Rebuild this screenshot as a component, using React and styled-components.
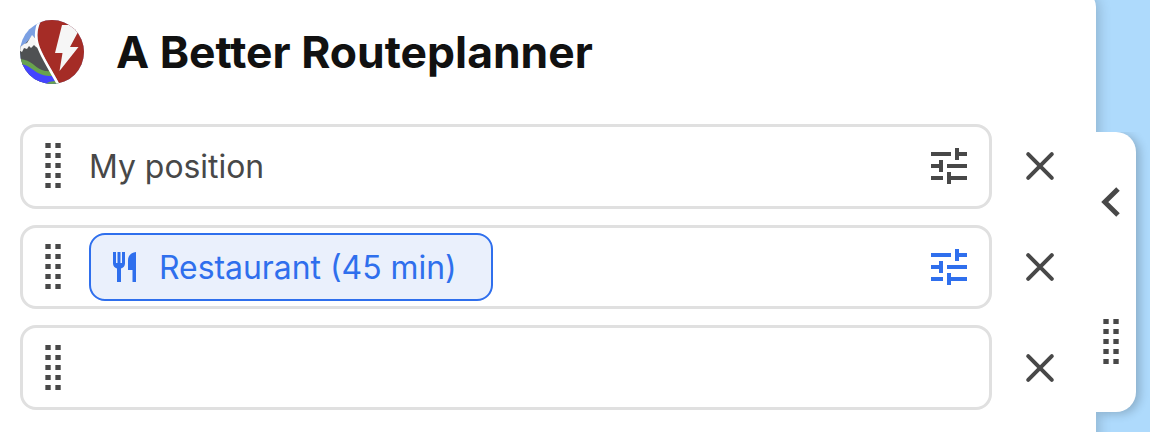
import React from 'react';
import styled, { createGlobalStyle } from 'styled-components';

const GlobalStyle = createGlobalStyle`
  *, *::before, *::after { box-sizing: border-box; }
  body { margin: 0; font-family: Inter, sans-serif; color: #484848; }
  svg { display: block; flex: none; }
`;

const Page = styled.div`
  display: flex;
  width: 1150px;
  height: 432px;
  overflow: hidden;
  background: #aedafc;
`;

const Panel = styled.main`
  width: 1096px;
  height: 460px;
  margin-top: -9px;
  padding: 29px 0 0 20px;
  flex: none;
  background: #fff;
  border-top-right-radius: 16px;
  box-shadow: 2px 2px 14px rgba(0, 0, 0, 0.2);
`;

const Header = styled.header`
  display: flex;
  align-items: center;
  gap: 32px;
  height: 64px;
  margin-bottom: 40px;
`;

const Title = styled.h1`
  margin: 0;
  font-size: 44.45px;
  line-height: 64px;
  font-weight: 700;
  color: #111;
  white-space: nowrap;
`;

const Stops = styled.div`
  display: flex;
  flex-direction: column;
  gap: 16px;
`;

const IconButton = styled.button`
  display: block;
  padding: 0;
  border: 0;
  background: none;
  color: ${(p) => (p.$active ? '#2f6fed' : '#484848')};
`;

const Field = styled.div`
  display: flex;
  align-items: center;
  width: 972px;
  height: 100%;
  padding: 0 16px ${(p) => p.$lift}px 21px;
  border: 3px solid #e0e0e0;
  border-radius: 16px;
`;

const StopRow = styled.div`
  display: flex;
  align-items: center;
  gap: 32px;
  height: ${(p) => p.$height}px;

  > ${IconButton} {
    margin-bottom: ${(p) => p.$lift}px;
  }
`;

const FieldContent = styled.div`
  display: flex;
  align-items: center;
  flex: 1;
  margin-left: 27px;
`;

const Label = styled.span`
  padding-top: 2px;
  font-size: 31.9px;
  line-height: 39px;
  white-space: nowrap;
`;

const Chip = styled.div`
  display: flex;
  align-items: center;
  gap: 22px;
  width: 404px;
  height: 68px;
  margin-top: 1px;
  padding-left: 22px;
  border: 2px solid #2f6fed;
  border-radius: 16px;
  background: #eaf0fc;
  color: #2f6fed;

  ${Label} {
    padding-top: 1px;
  }
`;

const SideTab = styled.aside`
  display: flex;
  flex-direction: column;
  justify-content: space-between;
  width: 40px;
  height: 280px;
  margin-top: 132px;
  padding: 54px 0 48px 5px;
  flex: none;
  background: #fff;
  border-radius: 0 20px 20px 0;
  box-shadow: 4px 2px 10px rgba(0, 0, 0, 0.2);
  clip-path: inset(0 -20px -20px 0);
`;

const TabGrip = styled.div`
  margin-left: 1px;
`;

const Grip = () => (
  <svg width="18" height="45" viewBox="0 0 18 45" fill="#484848">
    {[0, 10, 20, 30, 40].map((y) => (
      <React.Fragment key={y}>
        <rect x="1.35" y={y} width="5.35" height="5" />
        <rect x="11.35" y={y} width="5.35" height="5" />
      </React.Fragment>
    ))}
  </svg>
);

const TuneIcon = () => (
  <svg width="48" height="47" viewBox="0 0 24 23.5" fill="currentColor">
    <path d="M3 17v2h6v-2H3zM3 5v2h10V5H3zm10 16v-2h8v-2h-8v-2h-2v6h2zM7 9v2H3v2h4v2h2V9H7zm14 4v-2H11v2h10zm-6-4h2V7h4V5h-4V3h-2v6z" />
  </svg>
);

const CloseIcon = () => (
  <svg width="32" height="33" viewBox="0 0 32 33" stroke="currentColor" strokeWidth="4" strokeLinecap="round" fill="none">
    <path d="M4.2 5.2l23.6 23.6M27.8 5.2l-23.6 23.6" />
  </svg>
);

const ChevronIcon = () => (
  <svg width="20" height="32" viewBox="0 0 20 32" stroke="#484848" strokeWidth="5" fill="none">
    <path d="M17 3L3.8 16L17 29" />
  </svg>
);

const CutleryIcon = () => (
  <svg width="24" height="30" viewBox="0 0 24 30" fill="currentColor">
    <path d="M0 0h3v11h1.5V0h3v11H9V0h3v11.5c0 2.4-1.7 4.3-4 5V30H4V16.5C1.7 15.8 0 13.9 0 11.5z" />
    <path d="M23 0v30h-3.5V18H15V8.5C15 4 18 0.3 23 0z" />
  </svg>
);

const Logo = () => (
  <svg width="64" height="64" viewBox="0 0 64 64">
    <defs>
      <clipPath id="disc"><circle cx="32" cy="32" r="32" /></clipPath>
    </defs>
    <g clipPath="url(#disc)">
      <rect width="64" height="64" fill="#7ba0e3" />
      <path d="M0 27L6 23L12 16L17 19L24 40L38 64H0z" fill="#4f5153" />
      <path d="M-1 28L4 24L7 23L12 15L16 19L18 28L16 27L14 25L11 28L9 26L7 29L4 28L2 32L-1 30z" fill="#f6f6f6" />
      <path d="M0 44C13 43 16 51 24 54C29 55 32 54 36 53V64H0z" fill="#4444ff" />
      <path d="M0 39C12 40 14 47 22 50C27 52 31 51 36 50V55C30 57 24 56 18 53C11 49 9 45 0 44z" fill="#68a34e" />
      <path d="M26 64C29 61 34 61 39 61V64z" fill="#68a34e" />
      <path d="M23 -2C15 9 16 22 22 33C27 43 33 52 40 65H70V-2H23z" fill="#a52c26" />
      <path d="M21 -2C14 10 15 21 20.5 32C25 42 31 51 38.5 65" stroke="#fff" strokeWidth="2.6" fill="none" />
      <path d="M42 5H52L58 12L50 27H58.5L39.5 51L42.5 33H35z" fill="#f6f6f6" />
    </g>
  </svg>
);

const Stop = ({ height, lift, children, tune, active }) => (
  <StopRow $height={height} $lift={lift}>
    <Field $lift={lift}>
      <Grip />
      <FieldContent>{children}</FieldContent>
      {tune && <IconButton $active={active} aria-label="Settings"><TuneIcon /></IconButton>}
    </Field>
    <IconButton aria-label="Remove"><CloseIcon /></IconButton>
  </StopRow>
);

export default function App() {
  return (
    <>
      <GlobalStyle />
      <Page>
        <Panel>
          <Header>
            <Logo />
            <Title>A Better Routeplanner</Title>
          </Header>
          <Stops>
            <Stop height={85} lift={2} tune><Label>My position</Label></Stop>
            <Stop height={84} lift={1} tune active>
              <Chip>
                <CutleryIcon />
                <Label>Restaurant (45 min)</Label>
              </Chip>
            </Stop>
            <Stop height={85} lift={0} />
          </Stops>
        </Panel>
        <SideTab>
          <ChevronIcon />
          <TabGrip><Grip /></TabGrip>
        </SideTab>
      </Page>
    </>
  );
}
